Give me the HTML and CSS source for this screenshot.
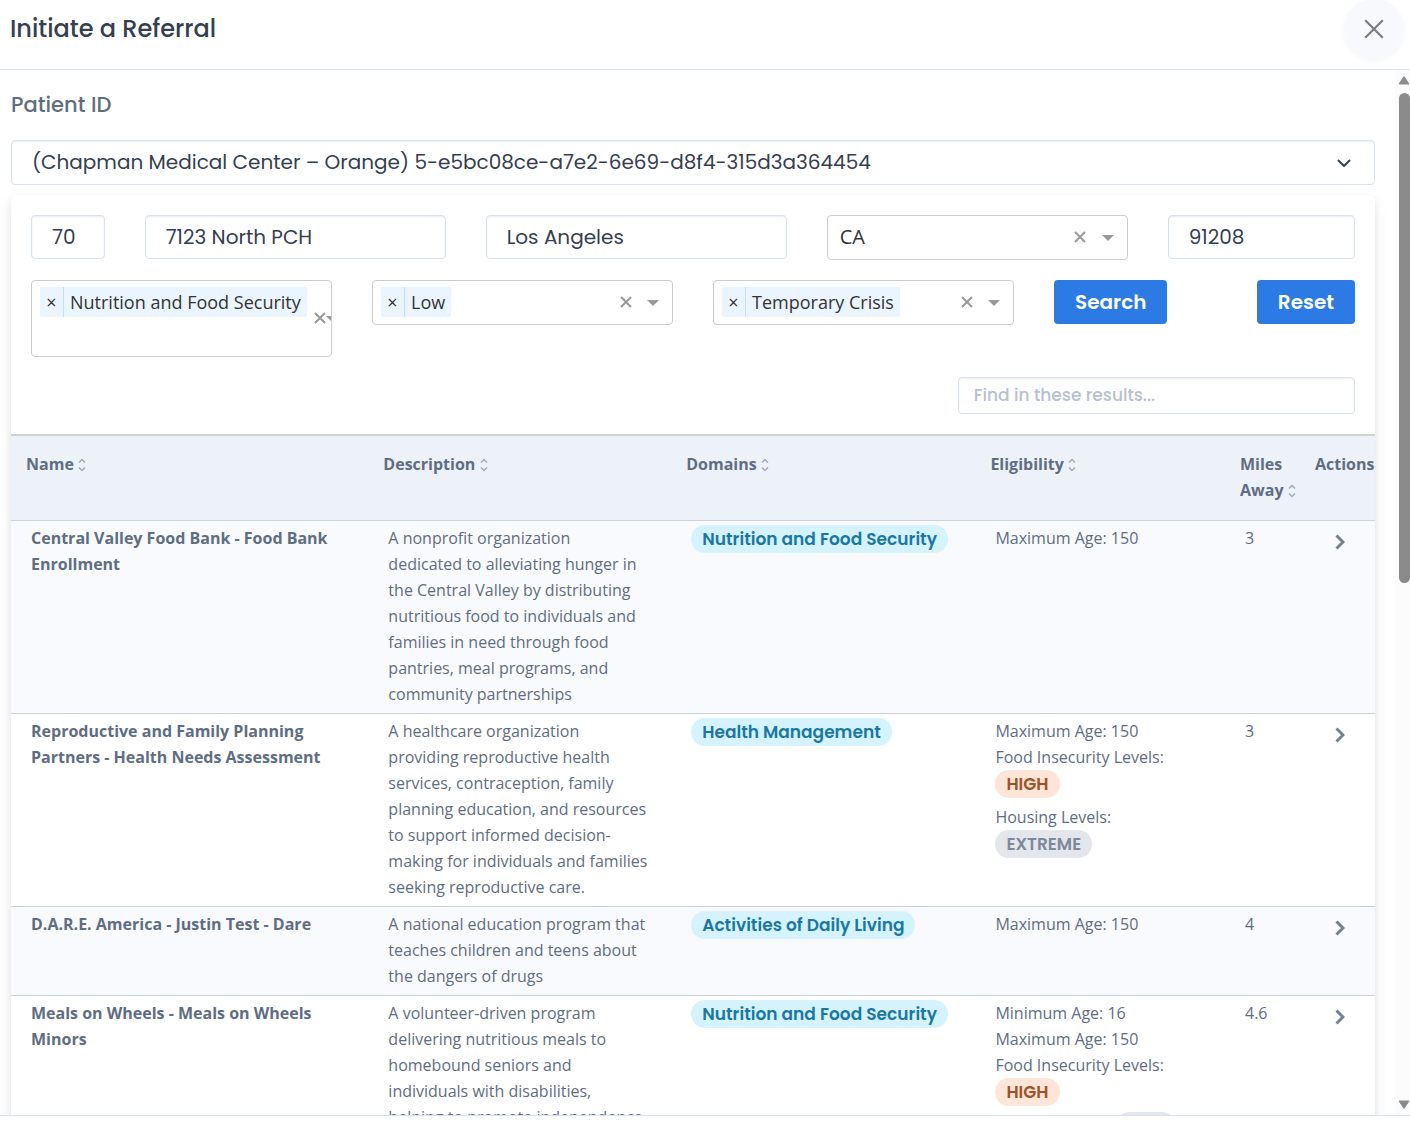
FILE: index.html
```html
<!DOCTYPE html>
<html lang="en">
<head>
  <meta charset="UTF-8" />
  <meta name="viewport" content="width=device-width, initial-scale=1.0" />
  <title>Initiate a Referral</title>
  <link rel="stylesheet" href="styles.css">
</head>
<body>
  <!-- shared icons -->
  <svg class="icon-defs" aria-hidden="true">
    <symbol id="icon-close" viewBox="0 0 20 20"><path d="M2 2l16 16M18 2L2 18" /></symbol>
    <symbol id="icon-clear" viewBox="0 0 12 12"><path d="M1 1l10 10M11 1L1 11" /></symbol>
    <symbol id="icon-chevron" viewBox="0 0 14 8"><path d="M1 1l6 6 6-6" /></symbol>
    <symbol id="icon-caret" viewBox="0 0 12 6"><path d="M0 0h12L6 6z" /></symbol>
    <symbol id="icon-sort" viewBox="0 0 8 14"><path d="M1 4.500l3-3 3 3M1 9.500l3 3 3-3" stroke-width="1.500" /></symbol>
    <symbol id="icon-go" viewBox="0 0 10 16"><path d="M1.500 1.500L8 8l-6.500 6.500" /></symbol>
  </svg>

  <div class="modal">
    <header class="modal-header">
      <h1>Initiate a Referral</h1>
      <button type="button" class="close" aria-label="Close"><svg><use href="#icon-close" /></svg></button>
    </header>

    <div class="modal-body">
      <div class="content">
        <label class="patient-label" for="patient">Patient ID</label>
        <div class="patient-select">
          <select id="patient">
            <option>(Chapman Medical Center – Orange) 5-e5bc08ce-a7e2-6e69-d8f4-315d3a364454</option>
          </select>
          <svg><use href="#icon-chevron" /></svg>
        </div>

        <div class="card">
          <form class="filters">
            <input class="field col-1" type="text" aria-label="Age" value="70">
            <input class="field col-3" type="text" aria-label="Address" value="7123 North PCH">
            <input class="field col-3" type="text" aria-label="City" value="Los Angeles">
            <div class="dropdown col-3">
              <select aria-label="State"><option>CA</option></select>
              <button type="button" class="dropdown-clear" aria-label="Clear state"><svg><use href="#icon-clear" /></svg></button>
              <button type="button" class="dropdown-arrow" aria-label="Open states"><svg><use href="#icon-caret" /></svg></button>
            </div>
            <input class="field col-2" type="text" aria-label="Zip" value="91208">

            <div class="dropdown dropdown-full col-3">
              <div class="chips">
                <span class="chip"><button type="button" aria-label="Remove Nutrition and Food Security">×</button><span>Nutrition and Food Security</span></span>
                <input type="text" aria-label="Domains">
              </div>
              <button type="button" class="dropdown-clear" aria-label="Clear domains"><svg><use href="#icon-clear" /></svg></button>
              <button type="button" class="dropdown-arrow" aria-label="Open domains"><svg><use href="#icon-caret" /></svg></button>
            </div>
            <div class="dropdown col-3">
              <div class="chips">
                <span class="chip"><button type="button" aria-label="Remove Low">×</button><span>Low</span></span>
                <input type="text" aria-label="Food insecurity level">
              </div>
              <button type="button" class="dropdown-clear" aria-label="Clear food insecurity level"><svg><use href="#icon-clear" /></svg></button>
              <button type="button" class="dropdown-arrow" aria-label="Open food insecurity levels"><svg><use href="#icon-caret" /></svg></button>
            </div>
            <div class="dropdown col-3">
              <div class="chips">
                <span class="chip"><button type="button" aria-label="Remove Temporary Crisis">×</button><span>Temporary Crisis</span></span>
                <input type="text" aria-label="Housing level">
              </div>
              <button type="button" class="dropdown-clear" aria-label="Clear housing level"><svg><use href="#icon-clear" /></svg></button>
              <button type="button" class="dropdown-arrow" aria-label="Open housing levels"><svg><use href="#icon-caret" /></svg></button>
            </div>
            <div class="buttons col-3">
              <button type="button" class="btn">Search</button>
              <button type="button" class="btn">Reset</button>
            </div>

            <input class="find" type="search" aria-label="Find in these results" placeholder="Find in these results...">
          </form>

          <table class="results">
            <colgroup>
              <col class="c-name"><col class="c-desc"><col class="c-domain"><col class="c-elig"><col class="c-small"><col class="c-small">
            </colgroup>
            <thead>
              <tr>
                <th>Name <svg class="sort"><use href="#icon-sort" /></svg></th>
                <th>Description <svg class="sort"><use href="#icon-sort" /></svg></th>
                <th>Domains <svg class="sort"><use href="#icon-sort" /></svg></th>
                <th>Eligibility <svg class="sort"><use href="#icon-sort" /></svg></th>
                <th>Miles Away <svg class="sort"><use href="#icon-sort" /></svg></th>
                <th>Actions</th>
              </tr>
            </thead>
            <tbody>
              <tr>
                <td class="name">Central Valley Food Bank - Food Bank Enrollment</td>
                <td>A nonprofit organization<br>dedicated to alleviating hunger in the Central Valley by distributing nutritious food to individuals and families in need through food pantries, meal programs, and community partnerships</td>
                <td><span class="pill pill-domain">Nutrition and Food Security</span></td>
                <td>Maximum Age: 150</td>
                <td>3</td>
                <td class="action"><button type="button" aria-label="Open referral"><svg><use href="#icon-go" /></svg></button></td>
              </tr>
              <tr>
                <td class="name">Reproductive and Family Planning Partners - Health Needs Assessment</td>
                <td>A healthcare organization providing reproductive health services, contraception, family planning education, and resources to support informed decision-making for individuals and families seeking reproductive care.</td>
                <td><span class="pill pill-domain">Health Management</span></td>
                <td>
                  <div>Maximum Age: 150</div>
                  <div class="level">Food Insecurity Levels: <span class="pill pill-high">HIGH</span></div>
                  <div class="level">Housing Levels: <span class="pill pill-other">EXTREME</span></div>
                </td>
                <td>3</td>
                <td class="action"><button type="button" aria-label="Open referral"><svg><use href="#icon-go" /></svg></button></td>
              </tr>
              <tr>
                <td class="name">D.A.R.E. America - Justin Test - Dare</td>
                <td>A national education program that teaches children and teens about the dangers of drugs</td>
                <td><span class="pill pill-domain">Activities of Daily Living</span></td>
                <td>Maximum Age: 150</td>
                <td>4</td>
                <td class="action"><button type="button" aria-label="Open referral"><svg><use href="#icon-go" /></svg></button></td>
              </tr>
              <tr>
                <td class="name">Meals on Wheels - Meals on Wheels Minors</td>
                <td>A volunteer-driven program delivering nutritious meals to homebound seniors and individuals with disabilities,<br>helping to promote independence</td>
                <td><span class="pill pill-domain">Nutrition and Food Security</span></td>
                <td>
                  <div>Minimum Age: 16</div>
                  <div>Maximum Age: 150</div>
                  <div class="level">Food Insecurity Levels: <span class="pill pill-high">HIGH</span></div>
                  <div class="level">Housing Levels: <span class="pill pill-other">LOW</span></div>
                </td>
                <td>4.6</td>
                <td class="action"><button type="button" aria-label="Open referral"><svg><use href="#icon-go" /></svg></button></td>
              </tr>
            </tbody>
          </table>
        </div>
      </div>

      <div class="scrollbar" aria-hidden="true">
        <svg viewBox="0 0 12 10"><path d="M6 1.500L11 9H1z" /></svg>
        <div class="scrollbar-track"><div class="scrollbar-thumb"></div></div>
        <svg viewBox="0 0 12 10"><path d="M1 1h10L6 8.500z" /></svg>
      </div>
    </div>

    <footer class="modal-footer"></footer>
  </div>
</body>
</html>
```
FILE: styles.css
```css
:root {
  --primary: #2c7be5;
  --heading: #344050;
  --text: #5e6e82;
  --border: #d8e2ef;
  --line: #cdd2d9;
  --radius: 4px;
  --ui-font: Poppins, Inter, sans-serif;
  --body-font: "Open Sans", sans-serif;
}

* {
  box-sizing: border-box;
}

body {
  margin: 0;
  font-family: var(--body-font);
  font-size: 16px;
  line-height: 26px;
  color: var(--text);
  background: #fff;
}

button,
input,
select {
  margin: 0;
  font: inherit;
  color: inherit;
}

.icon-defs {
  display: none;
}

svg {
  fill: none;
  stroke: currentColor;
}

.modal {
  display: flex;
  flex-direction: column;
  height: 100vh;
}

.modal-header {
  display: flex;
  justify-content: space-between;
  align-items: center;
  height: 70px;
  padding: 0 6px 11px 10px;
  border-bottom: 1px solid var(--border);
}

.modal-header h1 {
  margin: 0;
  font-family: var(--ui-font);
  font-size: 24px;
  font-weight: 500;
  line-height: 30px;
  color: var(--heading);
}

.close {
  display: grid;
  place-items: center;
  width: 60px;
  height: 60px;
  padding: 0;
  border: none;
  border-radius: 50%;
  background: #f8f9fc;
  color: #7d7d7f;
  box-shadow: 0 2px 6px rgba(0, 0, 0, 0.04);
  cursor: pointer;
}

.close svg {
  width: 22px;
  height: 22px;
  stroke-width: 2;
}

.modal-body {
  display: flex;
  flex: 1;
  min-height: 0;
}

.content {
  flex: 1;
  min-width: 0;
  overflow: hidden;
  padding: 20px 20px 0 11px;
}

.modal-footer {
  height: 21px;
  border-top: 1px solid var(--border);
}

.patient-label {
  display: block;
  margin-bottom: 20px;
  font-family: var(--ui-font);
  font-size: 21px;
  font-weight: 500;
  line-height: 30px;
}

.patient-select {
  display: grid;
  align-items: center;
  margin-bottom: 10px;
}

.patient-select select,
.patient-select svg {
  grid-area: 1 / 1;
}

.patient-select select {
  appearance: none;
  width: 100%;
  height: 45px;
  padding: 0 60px 1px 20px;
}

.patient-select svg {
  justify-self: end;
  width: 14px;
  height: 8px;
  margin-right: 24px;
  color: var(--heading);
  stroke-width: 2;
  pointer-events: none;
}

.patient-select select,
.field,
.find {
  min-width: 0;
  border: 1px solid var(--border);
  border-radius: var(--radius);
  background: #fff;
  font-family: var(--ui-font);
  font-size: 20px;
  color: var(--heading);
  box-shadow: inset 0 1px 2px rgba(0, 0, 0, 0.08);
}

.card {
  border-radius: 6px;
  background: #fff;
  box-shadow: 0 7px 14px rgba(65, 69, 88, 0.1), 0 3px 6px rgba(0, 0, 0, 0.07);
}

.filters {
  display: grid;
  grid-template-columns: repeat(12, 1fr);
  align-items: start;
  gap: 20px 40px;
  padding: 20px;
}

.col-1 { grid-column: span 1; }
.col-2 { grid-column: span 2; }
.col-3 { grid-column: span 3; }

.field {
  width: 100%;
  height: 44px;
  padding: 0 0 0 20px;
}

.find {
  grid-column: 1 / -1;
  justify-self: end;
  width: 30%;
  height: 37px;
  padding: 0 15px 2px;
  font-size: 17px;
  font-weight: 500;
}

.find::placeholder {
  color: #b6c1d2;
}

.dropdown {
  display: flex;
  align-items: center;
  min-width: 0;
  min-height: 45px;
  overflow: hidden;
  border: 1px solid #ccc;
  border-radius: var(--radius);
  background: #fff;
  color: #333;
}

.dropdown select {
  flex: 1;
  appearance: none;
  height: 43px;
  padding: 0 12px 2px;
  border: none;
  background: none;
  font-size: 20px;
}

.dropdown-clear,
.dropdown-arrow {
  display: flex;
  flex: none;
  align-items: center;
  justify-content: center;
  padding: 0;
  border: none;
  background: none;
  color: #999;
  cursor: pointer;
}

.dropdown-clear {
  width: 17px;
  padding-bottom: 2px;
}

.dropdown-clear svg {
  flex: none;
  width: 12px;
  height: 12px;
  stroke-width: 2;
}

.dropdown-arrow {
  width: 38px;
}

.dropdown-arrow svg {
  flex: none;
  width: 12px;
  height: 6px;
  fill: currentColor;
  stroke: none;
}

.chips {
  display: flex;
  flex: 1;
  flex-wrap: wrap;
  align-self: flex-start;
  min-width: 0;
  padding: 6px 0 6px 8px;
}

.chips input {
  flex: 1;
  min-width: 20px;
  width: 20px;
  height: 30px;
  padding: 0;
  border: none;
  outline: none;
}

.chip {
  display: flex;
  height: 30px;
  border-radius: 2px;
  background: #ebf5ff;
  font-size: 18px;
  line-height: 30px;
  white-space: nowrap;
}

.chip button {
  width: 24px;
  padding: 0;
  border: none;
  border-right: 1px solid #c2e0ff;
  background: none;
  cursor: pointer;
}

.chip span {
  padding: 0 6px;
}

/* the chip takes the whole line, so the controls are squeezed to the edge */
.dropdown-full .chips {
  row-gap: 3px;
}

.dropdown-full .dropdown-clear {
  width: 12px;
}

.dropdown-full .dropdown-arrow {
  justify-content: flex-start;
  width: 5px;
}

.buttons {
  display: flex;
  justify-content: space-between;
}

.btn {
  height: 44px;
  padding: 0 21px;
  border: none;
  border-radius: var(--radius);
  background: var(--primary);
  font-family: var(--ui-font);
  font-size: 20px;
  font-weight: 600;
  color: #fff;
  cursor: pointer;
}

.results {
  width: 100%;
  table-layout: fixed;
  border-collapse: separate;
  border-spacing: 0;
  border-top: 2px solid var(--line);
}

.c-name { width: 26.2%; }
.c-domain { width: 22.3%; }
.c-elig { width: 18.3%; }
.c-small { width: 75px; }

.results th,
.results td {
  border-bottom: 1px solid var(--line);
  text-align: left;
  vertical-align: top;
}

.results th {
  padding: 15px 0 17px 15px;
  background: #edf2f9;
  font-weight: 700;
}

.results td {
  padding: 4px 20px 6px 20px;
}

.results tbody tr:nth-child(odd) {
  background: #f9fafd;
}

.results .name {
  font-weight: 700;
}

.sort {
  width: 8px;
  height: 14px;
  vertical-align: -2px;
  color: #a0abba;
}

.pill {
  display: inline-block;
  padding: 0 11px;
  border-radius: 14px;
  font-family: var(--ui-font);
  font-size: 17px;
  font-weight: 600;
  line-height: 28px;
  vertical-align: top;
}

.pill-domain {
  background: #d5f2ff;
  color: #1978a2;
}

.pill-high {
  background: #fde6d8;
  color: #9d5228;
}

.pill-other {
  background: #e3e6ea;
  color: #7d899b;
}

.level {
  margin-bottom: 6px;
}

.results .action {
  padding: 4px 0 6px;
}

.action button {
  display: flex;
  align-items: center;
  height: 34px;
  margin-left: 35px;
  padding: 0;
  border: none;
  background: none;
  color: #748194;
  cursor: pointer;
}

.action svg {
  width: 10px;
  height: 16px;
  stroke-width: 3;
}

.scrollbar {
  display: flex;
  flex: none;
  flex-direction: column;
  width: 15px;
  padding: 5px 0 5px 3px;
  overflow: hidden;
  background: #fcfcfc;
}

.scrollbar svg {
  width: 12px;
  height: 10px;
  fill: #8b8b8b;
  stroke: #8b8b8b;
  stroke-linejoin: round;
}

.scrollbar-track {
  flex: 1;
  padding: 8px 0 8px 1px;
}

.scrollbar-thumb {
  height: 49%;
  border-radius: 6px;
  background: #8b8b8b;
}
```
